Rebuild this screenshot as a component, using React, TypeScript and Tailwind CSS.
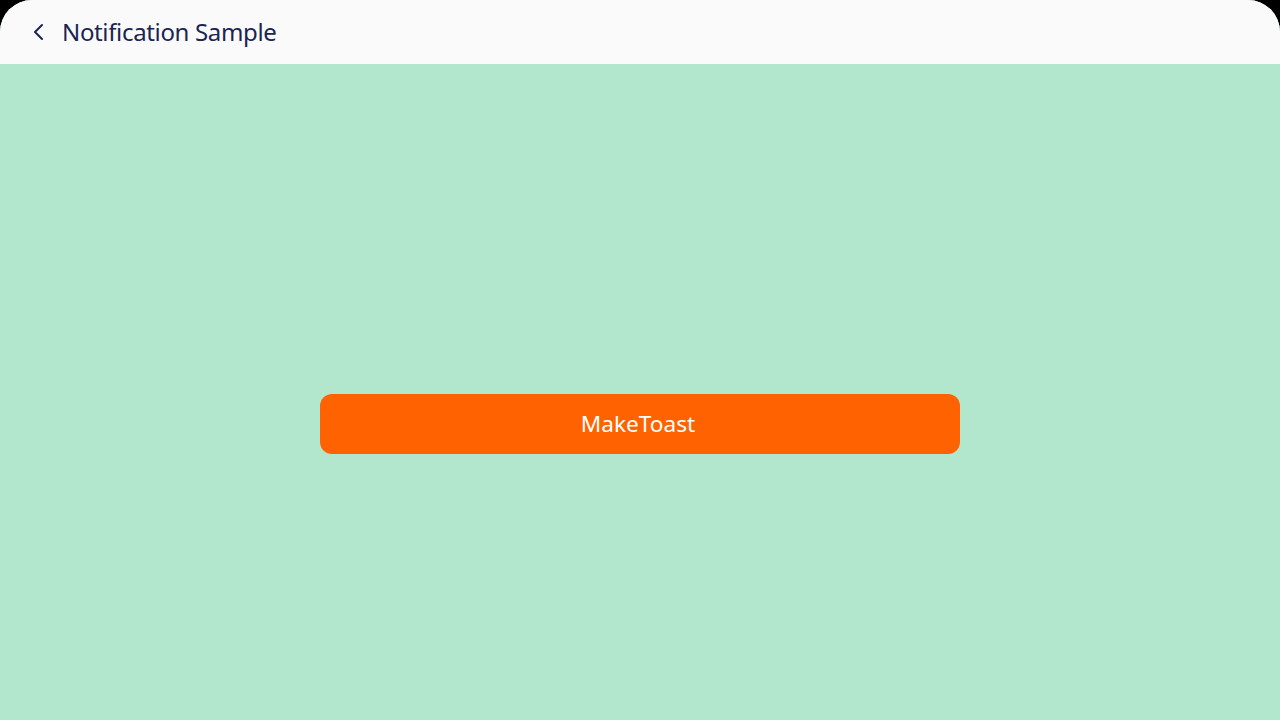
import React from "react";

export default function App() {
  return (
    <div className="w-[1280px] h-[720px] bg-black overflow-hidden" style={{ fontFamily: '"Noto Sans", "Open Sans", sans-serif' }}>
      <div className="w-full h-full flex flex-col rounded-t-[32px] overflow-hidden bg-[#b2e6cd]">
        <div className="h-[64px] bg-[#fafafa] flex items-center pl-[29px] shrink-0">
          <svg width="20" height="20" viewBox="0 0 20 20" className="mr-[13px]">
            <path d="M13 3 L6 10 L13 17" fill="none" stroke="#1a2552" strokeWidth="2" strokeLinecap="round" strokeLinejoin="round" />
          </svg>
          <span className="text-[24px] text-[#1a2552] leading-none tracking-[-0.35px]">Notification Sample</span>
        </div>
        <div className="flex-1 flex items-center justify-center pt-[64px]">
          <button className="w-[640px] h-[60px] rounded-[12px] bg-[#ff6200] text-white text-[22.6px] flex items-center justify-center pr-[4px]">
            MakeToast
          </button>
        </div>
      </div>
    </div>
  );
}
